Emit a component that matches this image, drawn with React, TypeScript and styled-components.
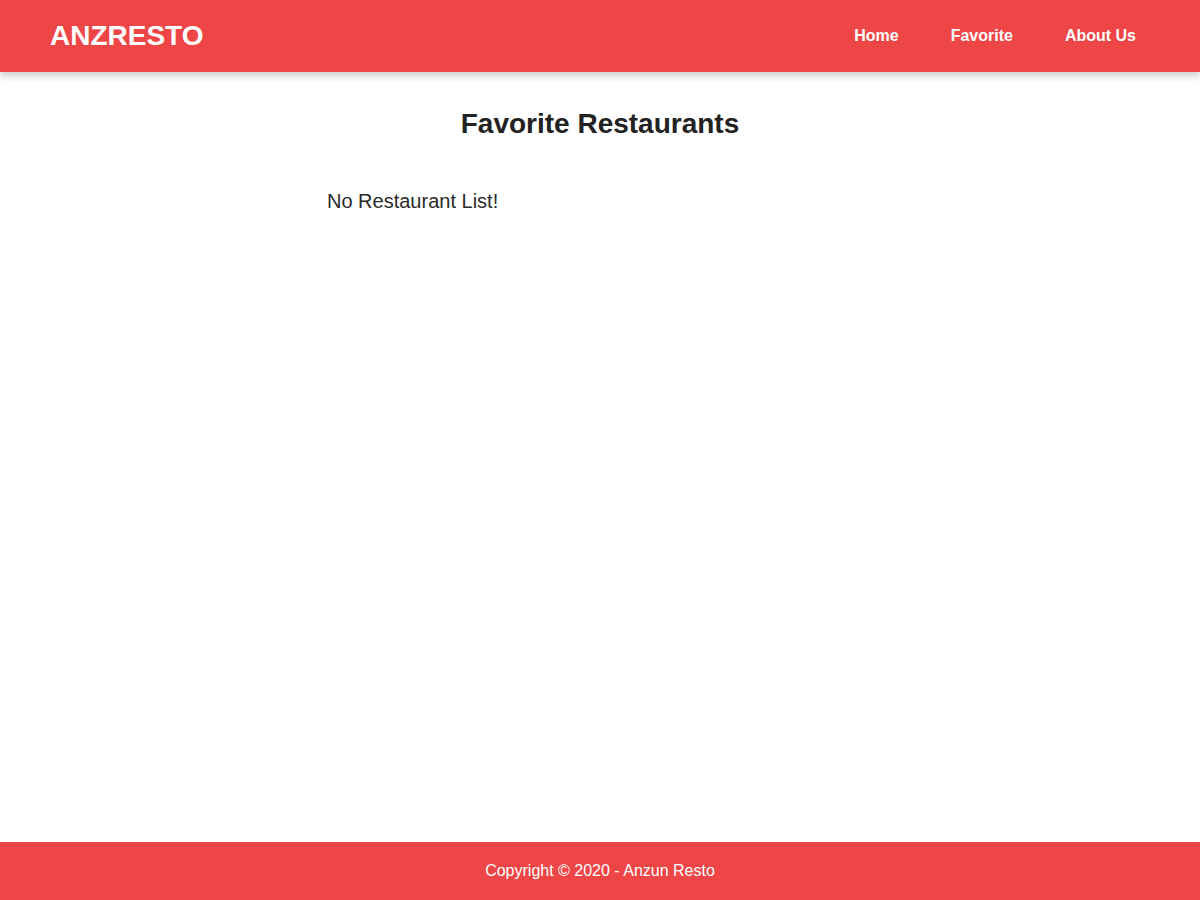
import { createGlobalStyle } from "styled-components"
import styled from "styled-components"

const GlobalStyle = createGlobalStyle`
    * {
        box-sizing: border-box;
    }
    body {
        margin: 0;
        font-family: "Liberation Sans", Arial, sans-serif;
        background: #fff;
        color: #333;
    }
`

const AppRoot = styled.div`
    display: flex;
    flex-direction: column;
    min-height: 100vh;
`

const Header = styled.header`
    display: flex;
    align-items: center;
    justify-content: space-between;
    height: 72px;
    padding: 0 38px 0 50px;
    background-color: #ee4646;
    box-shadow: 0 4px 8px rgba(0, 0, 0, 0.2);
    position: relative;
    z-index: 1;
`

const Brand = styled.a`
    color: #fff;
    font-size: 28px;
    font-weight: bold;
    text-decoration: none;
`

const Nav = styled.nav`
    display: flex;
`

const NavLink = styled.a`
    color: #fff;
    font-size: 16px;
    font-weight: bold;
    text-decoration: none;
    padding: 10px 26px;
`

const Main = styled.main`
    flex-grow: 1;
    width: 546px;
    margin: 0 auto;
    padding-top: 36px;
`

const Title = styled.h2`
    margin: 0;
    text-align: center;
    font-size: 28px;
    font-weight: bold;
    color: #222;
`

const EmptyNote = styled.p`
    margin: 0;
    padding-top: 50px;
    font-size: 20px;
    color: #2a2a2a;
`

const Footer = styled.footer`
    display: flex;
    align-items: center;
    justify-content: center;
    height: 58px;
    background-color: #ee4646;
    color: #fff;
    font-size: 16px;
`

export default function App() {
    return (
        <AppRoot>
            <GlobalStyle />
            <Header>
                <Brand href="#">ANZRESTO</Brand>
                <Nav>
                    <NavLink href="#">Home</NavLink>
                    <NavLink href="#">Favorite</NavLink>
                    <NavLink href="#">About Us</NavLink>
                </Nav>
            </Header>
            <Main>
                <Title>Favorite Restaurants</Title>
                <EmptyNote>No Restaurant List!</EmptyNote>
            </Main>
            <Footer>Copyright © 2020 - Anzun Resto</Footer>
        </AppRoot>
    )
}
